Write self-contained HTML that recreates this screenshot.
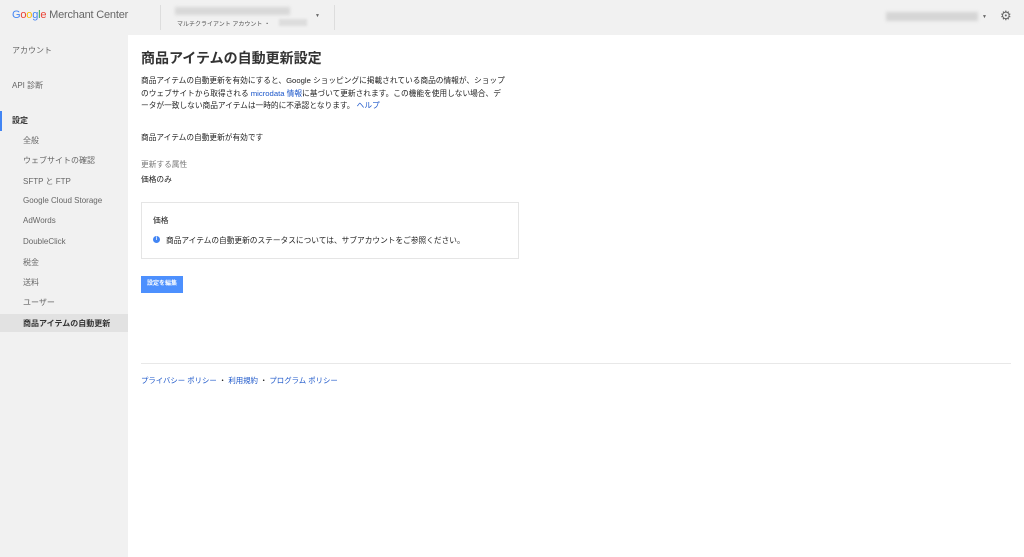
<!DOCTYPE html>
<html><head><meta charset="utf-8"><style>
*{margin:0;padding:0;box-sizing:border-box}
body{width:1024px;height:557px;background:#f1f1f1;font-family:"Liberation Sans","Noto Sans CJK JP",sans-serif;position:relative;overflow:hidden;color:#222}
.a{position:absolute}
.side{font-size:8px;color:#666}
.main{left:128px;top:35px;width:896px;height:522px;background:#fff}
.t{font-size:7.7px;color:#222;white-space:nowrap}
a{color:#1a55c9;text-decoration:none}
</style></head><body>
<div class="a" style="left:12px;top:9px;font-size:11px;letter-spacing:-0.2px"><span style="color:#4285f4">G</span><span style="color:#ea4335">o</span><span style="color:#fbbc05">o</span><span style="color:#4285f4">g</span><span style="color:#34a853">l</span><span style="color:#ea4335">e</span> <span style="color:#666">Merchant Center</span></div>
<div class="a" style="left:160px;top:5px;width:1px;height:25px;background:#ddd"></div>
<div class="a" style="left:334px;top:5px;width:1px;height:25px;background:#ddd"></div>
<div class="a" style="left:175px;top:7px;width:115px;height:8px;background:#d8d8d8;filter:blur(1.5px)"></div>
<div class="a" style="left:177px;top:19px;font-size:6px;color:#555">マルチクライアント アカウント ・</div>
<div class="a" style="left:279px;top:19px;width:28px;height:7px;background:#ddd;filter:blur(1px)"></div>
<div class="a" style="left:315px;top:13px;font-size:5px;color:#666">▼</div>
<div class="a" style="left:886px;top:12px;width:92px;height:9px;background:#d5d5d5;filter:blur(1.5px)"></div>
<div class="a" style="left:982px;top:14px;font-size:5px;color:#666">▼</div>
<div class="a" style="left:1000px;top:8px;font-size:13px;color:#666">⚙</div>

<div class="a side" style="left:12px;top:45px">アカウント</div>
<div class="a side" style="left:12px;top:80px">API 診断</div>
<div class="a" style="left:0;top:111px;width:2px;height:20px;background:#4285f4"></div>
<div class="a side" style="left:12px;top:115px;color:#333;font-weight:bold">設定</div>
<div class="a side" style="left:23px;top:135px">全般</div>
<div class="a side" style="left:23px;top:155px">ウェブサイトの確認</div>
<div class="a side" style="left:23px;top:176px">SFTP と FTP</div>
<div class="a side" style="left:23px;top:196px">Google Cloud Storage</div>
<div class="a side" style="left:23px;top:216px">AdWords</div>
<div class="a side" style="left:23px;top:237px">DoubleClick</div>
<div class="a side" style="left:23px;top:257px">税金</div>
<div class="a side" style="left:23px;top:277px">送料</div>
<div class="a side" style="left:23px;top:297px">ユーザー</div>
<div class="a" style="left:0;top:314px;width:128px;height:18px;background:#e2e2e2"></div>
<div class="a side" style="left:23px;top:318px;color:#333;font-weight:bold">商品アイテムの自動更新</div>

<div class="a main"></div>
<div class="a" style="left:141px;top:48px;font-size:14px;font-weight:bold;color:#333">商品アイテムの自動更新設定</div>
<div class="a t" style="left:141px;top:75px;line-height:12.5px">商品アイテムの自動更新を有効にすると、Google ショッピングに掲載されている商品の情報が、ショップ<br>のウェブサイトから取得される <a>microdata 情報</a>に基づいて更新されます。この機能を使用しない場合、デ<br>ータが一致しない商品アイテムは一時的に不承認となります。 <a>ヘルプ</a></div>
<div class="a t" style="left:141px;top:132px">商品アイテムの自動更新が有効です</div>
<div class="a t" style="left:141px;top:159px;color:#777">更新する属性</div>
<div class="a t" style="left:141px;top:174px">価格のみ</div>
<div class="a" style="left:141px;top:202px;width:378px;height:57px;border:1px solid #e5e5e5"></div>
<div class="a t" style="left:153px;top:215px">価格</div>
<div class="a" style="left:153px;top:236px;width:7px;height:7px;border-radius:50%;background:#4285f4;color:#fff;font-size:5px;text-align:center;line-height:7px;font-weight:bold">i</div>
<div class="a t" style="left:166px;top:235px">商品アイテムの自動更新のステータスについては、サブアカウントをご参照ください。</div>
<div class="a" style="left:141px;top:276px;width:42px;height:17px;background:#4d90fe;color:#fff;font-size:6px;font-weight:bold;text-align:center;line-height:17px">設定を編集</div>
<div class="a" style="left:141px;top:363px;width:870px;height:1px;background:#e8e8e8"></div>
<div class="a t" style="left:141px;top:375px;font-size:7.4px"><a>プライバシー ポリシー</a> ・ <a>利用規約</a> ・ <a>プログラム ポリシー</a></div>
</body></html>
